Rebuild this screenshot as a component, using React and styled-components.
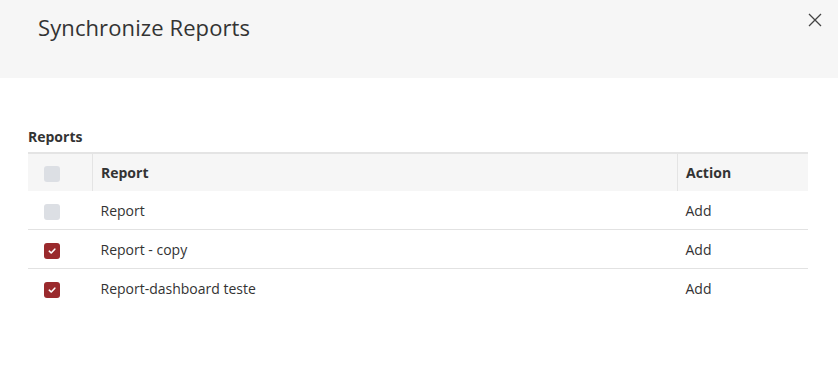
import styled, { createGlobalStyle } from "styled-components";

const GlobalStyle = createGlobalStyle`
  body {
    margin: 0;
    background: #ffffff;
    font-family: "Open Sans", "Liberation Sans", sans-serif;
    color: #333333;
  }
`;

const Modal = styled.div`
  width: 838px;
  height: 373px;
  background: #ffffff;
`;

const Header = styled.div`
  height: 78px;
  background: #f6f6f6;
  display: flex;
  justify-content: space-between;
  align-items: flex-start;
  padding: 0 15px 0 38px;
  box-sizing: border-box;
`;

const Title = styled.h1`
  margin: 12px 0 0;
  font-size: 22px;
  font-weight: 400;
  color: #333333;
  letter-spacing: 0.1px;
`;

const CloseButton = styled.button`
  margin-top: 12px;
  background: none;
  border: none;
  padding: 0;
  width: 16px;
  height: 16px;
  cursor: pointer;
  color: #444444;
`;

const Body = styled.div`
  padding: 49px 30px 0 28px;
`;

const SectionLabel = styled.div`
  font-size: 14px;
  font-weight: 700;
  color: #333333;
  margin-bottom: 6px;
`;

const Table = styled.table`
  width: 780px;
  border-collapse: collapse;
  border-top: 2px solid #e4e4e4;
  font-size: 14px;
`;

const HeadCell = styled.th`
  height: 37px;
  background: #f6f6f6;
  text-align: left;
  font-weight: 700;
  color: #333333;
  padding: ${(p) => (p.$first ? "0 8px 0 16px" : "0 8px")};
  border-left: ${(p) => (p.$first ? "none" : "1px solid #e4e4e4")};
  width: ${(p) => p.$width || "auto"};
  box-sizing: content-box;
`;

const Row = styled.tr`
  border-top: ${(p) => (p.$first ? "none" : "1px solid #e2e2e2")};
`;

const Cell = styled.td`
  height: 38px;
  padding: 0 8px;
  color: #333333;
`;

const BoxCell = styled.td`
  height: 38px;
  padding: 0 8px 0 16px;
`;

const Box = styled.span`
  display: inline-block;
  vertical-align: middle;
  width: 16px;
  height: 16px;
  border-radius: 3px;
  background: ${(p) => (p.$checked ? "#9a2a2d" : "#dcdfe4")};
  position: relative;
`;

const Check = styled.svg`
  position: absolute;
  left: 3px;
  top: 3px;
`;

function Checkbox({ checked }) {
  return (
    <Box $checked={checked}>
      {checked && (
        <Check width="10" height="10" viewBox="0 0 10 10">
          <path
            d="M2.3 5.2 L4.2 7 L7.8 3.2"
            fill="none"
            stroke="#ffffff"
            strokeWidth="1.6"
            strokeLinecap="round"
            strokeLinejoin="round"
          />
        </Check>
      )}
    </Box>
  );
}

const reports = [
  { name: "Report", action: "Add", checked: false },
  { name: "Report - copy", action: "Add", checked: true },
  { name: "Report-dashboard teste", action: "Add", checked: true },
];

export default function App() {
  return (
    <>
      <GlobalStyle />
      <Modal>
        <Header>
          <Title>Synchronize Reports</Title>
          <CloseButton aria-label="Close">
            <svg width="16" height="16" viewBox="0 0 16 16">
              <path
                d="M2 2 L14 14 M14 2 L2 14"
                stroke="#444444"
                strokeWidth="1.3"
                fill="none"
              />
            </svg>
          </CloseButton>
        </Header>
        <Body>
          <SectionLabel>Reports</SectionLabel>
          <Table>
            <thead>
              <tr>
                <HeadCell $first $width="40px">
                  <Checkbox checked={false} />
                </HeadCell>
                <HeadCell>Report</HeadCell>
                <HeadCell $width="114px">Action</HeadCell>
              </tr>
            </thead>
            <tbody>
              {reports.map((r, i) => (
                <Row key={r.name} $first={i === 0}>
                  <BoxCell>
                    <Checkbox checked={r.checked} />
                  </BoxCell>
                  <Cell>{r.name}</Cell>
                  <Cell>{r.action}</Cell>
                </Row>
              ))}
            </tbody>
          </Table>
        </Body>
      </Modal>
    </>
  );
}
